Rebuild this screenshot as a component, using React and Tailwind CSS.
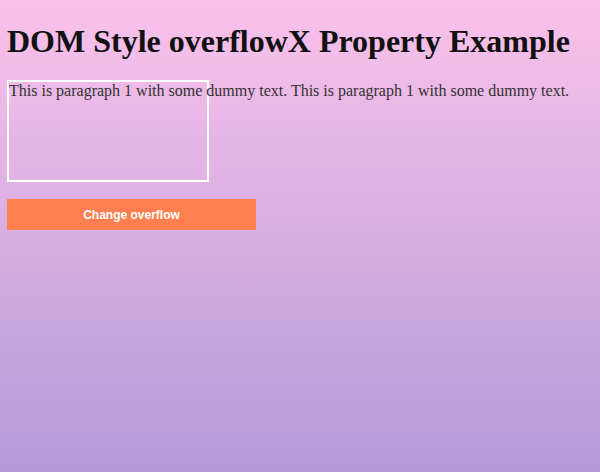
import React, { useState } from 'react';

export default function App() {
    const [overflow, setOverflow] = useState(false);

    return (
        <div className="min-h-screen w-full bg-gradient-to-b from-[#fbc2eb] to-[#b49ad8] px-[7px] pt-[23px] font-['Liberation_Serif',serif]">
            {/* Heading */}
            <h1 className="text-[32px] font-bold leading-[37px] text-[#111] mb-[20px]">
                DOM Style overflowX Property Example
            </h1>

            {/* Box with overflowing paragraph */}
            <div className={overflow ? "w-[202px] h-[102px] border-2 border-white overflow-x-scroll" : "w-[202px] h-[102px] border-2 border-white"}>
                <p className="text-base leading-[18px] text-[#333] whitespace-nowrap">
                    This is paragraph 1 with some dummy text. This is paragraph 1 with some dummy text.
                </p>
            </div>

            {/* Button */}
            <button
                onClick={() => setOverflow(!overflow)}
                className="mt-[17px] w-[249px] h-[31px] bg-[#ff7f50] text-white text-xs font-bold font-['Liberation_Sans',sans-serif]"
            >
                Change overflow
            </button>
        </div>
    );
}
